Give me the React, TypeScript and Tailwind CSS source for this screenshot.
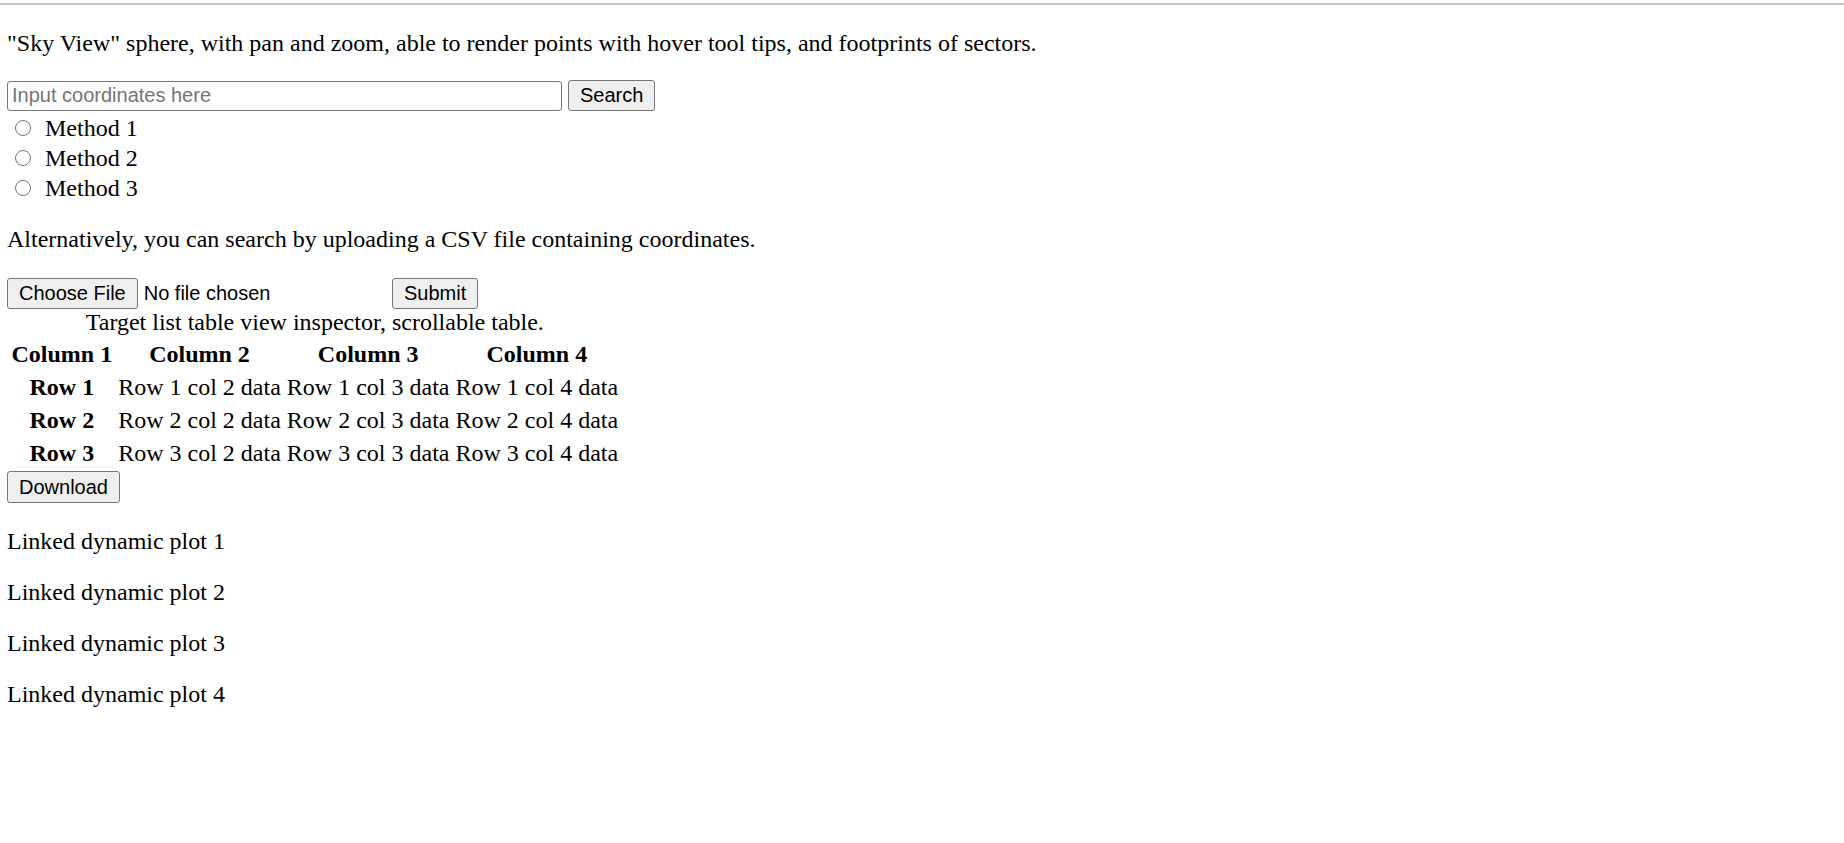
import { useState } from "react";

const btn =
  "h-[31px] px-[11px] bg-[#efefef] border border-[#767676] rounded-[3px] text-black text-[20px] leading-[23px] font-['Liberation_Sans',Arial,sans-serif] whitespace-nowrap";

const rows = [1, 2, 3];

const App = () => {
  const [method, setMethod] = useState<number | null>(null);
  const [coords, setCoords] = useState("");

  return (
    <div className="min-h-screen bg-white text-black font-['Liberation_Serif','Times_New_Roman',serif] text-[24px] leading-[27px]">
      {/* top rule */}
      <div className="pt-[3px]">
        <div className="h-[2px] bg-[#c4c4c4]"></div>
      </div>

      <div className="px-[7px]">
        <p className="mt-[25px] mb-[23px]">
          "Sky View" sphere, with pan and zoom, able to render points with hover tool tips, and footprints of sectors.
        </p>

        <div className="flex items-center gap-[6px]">
          <input
            type="text"
            value={coords}
            onChange={(e) => setCoords(e.target.value)}
            placeholder="Input coordinates here"
            className="w-[555px] h-[30px] px-[4px] border border-[#767676] rounded-[3px] bg-white text-[20px] font-['Liberation_Sans',Arial,sans-serif] placeholder:text-[#757575] outline-none"
          />
          <button className={btn}>Search</button>
        </div>

        <div className="mt-[3px]">
          {rows.map((n) => (
            <label key={n} className="flex h-[30px] items-start cursor-pointer">
              <input
                type="radio"
                name="method"
                checked={method === n}
                onChange={() => setMethod(n)}
                className="shrink-0 box-border mt-[6px] ml-[8px] mr-[14px] w-[16px] h-[16px] appearance-none rounded-full border border-[#767676] bg-white checked:border-[5px] checked:border-[#0075ff]"
              />
              <span className="mt-[1px]">Method {n}</span>
            </label>
          ))}
        </div>

        <p className="mt-[22px] mb-[25px]">Alternatively, you can search by uploading a CSV file containing coordinates.</p>

        <div className="flex items-center gap-[6px]">
          <div className="w-[379px] flex items-center gap-[6px]">
            <button className={btn}>Choose File</button>
            <span className="text-[20px] leading-[23px] font-['Liberation_Sans',Arial,sans-serif]">No file chosen</span>
          </div>
          <button className={btn}>Submit</button>
        </div>

        <table className="border-separate border-spacing-[3px]">
          <caption className="text-center">Target list table view inspector, scrollable table.</caption>
          <thead>
            <tr>
              {[1, 2, 3, 4].map((c) => (
                <th key={c} className="p-[1.5px] font-bold text-center">
                  Column {c}
                </th>
              ))}
            </tr>
          </thead>
          <tbody>
            {rows.map((r) => (
              <tr key={r}>
                <th className="p-[1.5px] font-bold text-center">Row {r}</th>
                {[2, 3, 4].map((c) => (
                  <td key={c} className="p-[1.5px] text-left whitespace-nowrap">
                    Row {r} col {c} data
                  </td>
                ))}
              </tr>
            ))}
          </tbody>
        </table>

        <button className={`${btn} h-[32px]`}>Download</button>

        <div className="mt-[25px]">
          {[1, 2, 3, 4].map((n) => (
            <p key={n} className="mb-6">
              Linked dynamic plot {n}
            </p>
          ))}
        </div>
      </div>
    </div>
  );
};

export default App;
